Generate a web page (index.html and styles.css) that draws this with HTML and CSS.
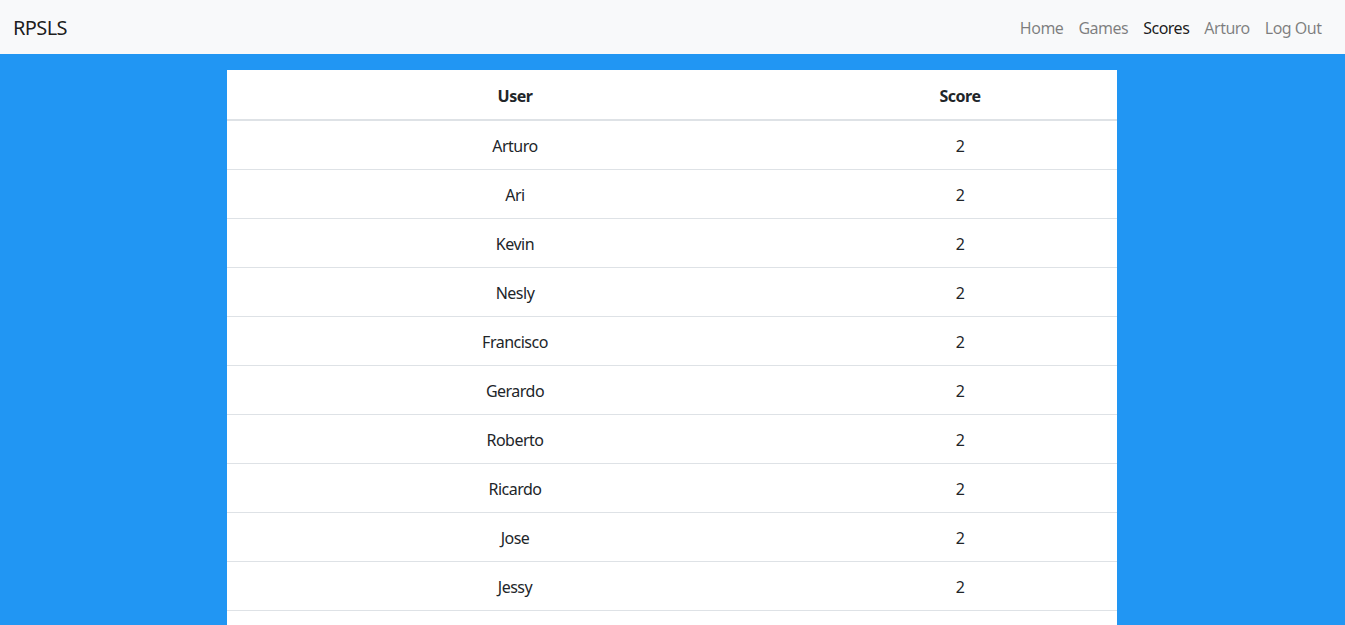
FILE: index.html
```html
<!DOCTYPE html>
<html lang="en">
<head>
<meta charset="utf-8">
<title>RPSLS</title>
<link rel="stylesheet" href="styles.css">
</head>
<body>
<nav class="navbar">
  <a class="brand" href="#">RPSLS</a>
  <ul class="nav">
    <li><a class="nav-link" href="#">Home</a></li>
    <li><a class="nav-link" href="#">Games</a></li>
    <li><a class="nav-link active" href="#">Scores</a></li>
    <li><a class="nav-link" href="#">Arturo</a></li>
    <li><a class="nav-link" href="#">Log Out</a></li>
  </ul>
</nav>
<main class="main">
  <table class="scores">
    <thead>
      <tr><th class="col-user">User</th><th class="col-score">Score</th></tr>
    </thead>
    <tbody>
      <tr><td>Arturo</td><td>2</td></tr>
      <tr><td>Ari</td><td>2</td></tr>
      <tr><td>Kevin</td><td>2</td></tr>
      <tr><td>Nesly</td><td>2</td></tr>
      <tr><td>Francisco</td><td>2</td></tr>
      <tr><td>Gerardo</td><td>2</td></tr>
      <tr><td>Roberto</td><td>2</td></tr>
      <tr><td>Ricardo</td><td>2</td></tr>
      <tr><td>Jose</td><td>2</td></tr>
      <tr><td>Jessy</td><td>2</td></tr>
      <tr><td>&nbsp;</td><td>&nbsp;</td></tr>
    </tbody>
  </table>
</main>
</body>
</html>
```
FILE: styles.css
```css
* { box-sizing: border-box; }
html, body { margin: 0; padding: 0; }
body {
  font-family: "Noto Sans", "Open Sans", sans-serif;
  font-size: 16px;
  line-height: 1.5;
  letter-spacing: -0.5px;
  color: #212529;
  background: #2196f3;
  overflow: hidden;
  height: 625px;
}
.navbar {
  background: #f8f9fa;
  height: 54px;
  display: flex;
  align-items: center;
  justify-content: space-between;
  padding: 1px 16px 0 13px;
}
.brand {
  font-size: 20px;
  letter-spacing: -0.6px;
  color: rgba(0,0,0,.9);
  text-decoration: none;
}
.nav {
  list-style: none;
  margin: 0;
  padding: 0;
  display: flex;
}
.nav-link {
  display: block;
  padding: 8px 7.5px;
  color: rgba(0,0,0,.5);
  text-decoration: none;
}
.nav-link.active { color: rgba(0,0,0,.9); }
.main {
  padding-top: 16px;
  padding-right: 1px;
  display: flex;
  justify-content: center;
}
.scores {
  width: 890px;
  background: #fff;
  border-collapse: collapse;
}
.scores th, .scores td {
  padding: 13px 12px 11px;
  text-align: center;
  border-top: 1px solid #dee2e6;
  vertical-align: top;
}
.scores th {
  font-weight: bold;
  border-top: none;
  padding-top: 14px;
  padding-bottom: 11px;
  border-bottom: 2px solid #dee2e6;
}
.col-user { width: 576px; }
.col-score { width: 314px; }
```
